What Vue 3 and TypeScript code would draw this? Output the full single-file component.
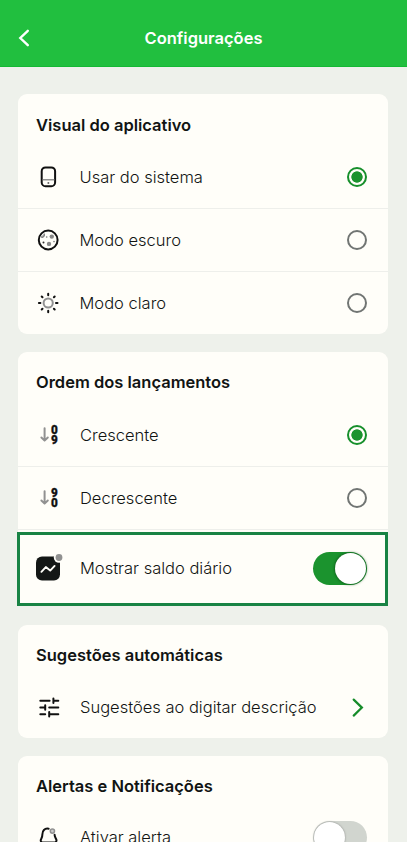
<script setup lang="ts">
import { ref } from 'vue'

type Theme = 'system' | 'dark' | 'light'
type Order = 'asc' | 'desc'

const theme = ref<Theme>('system')
const order = ref<Order>('asc')
const dailyBalance = ref(true)
const alertOn = ref(false)

const themes: { id: Theme; label: string }[] = [
  { id: 'system', label: 'Usar do sistema' },
  { id: 'dark', label: 'Modo escuro' },
  { id: 'light', label: 'Modo claro' },
]
const orders: { id: Order; label: string; digits: [string, string] }[] = [
  { id: 'asc', label: 'Crescente', digits: ['0', '9'] },
  { id: 'desc', label: 'Decrescente', digits: ['9', '0'] },
]
</script>

<template>
  <div class="screen">
    <header class="header">
      <svg class="back" viewBox="0 0 12 18">
        <path d="M9.8 1.8 2.3 9l7.5 7.2" fill="none" stroke="#fff" stroke-width="2.4" stroke-linecap="round" stroke-linejoin="miter" />
      </svg>
      <h1>Configurações</h1>
    </header>

    <main class="content">
      <section class="card visual">
        <h2>Visual do aplicativo</h2>
        <div v-for="t in themes" :key="t.id" class="row" @click="theme = t.id">
          <svg v-if="t.id === 'system'" class="icon" viewBox="0 0 24 24" fill="none">
            <rect x="5.7" y="2.4" width="13.4" height="18.8" rx="3.8" stroke="#111" stroke-width="2" />
            <path d="M6.5 14.8h12" stroke="#777" stroke-width="1.2" />
            <circle cx="12.4" cy="18" r="1" fill="#666" />
          </svg>
          <svg v-else-if="t.id === 'dark'" class="icon" viewBox="0 0 24 24" fill="none">
            <circle cx="12.2" cy="12" r="9.4" stroke="#111" stroke-width="2" />
            <path d="M5.1 8.7c1.2 1.4 4 .1 3.2-3.1" fill="#aaa" stroke="#777" stroke-width="1.1" />
            <circle cx="15.8" cy="8.6" r="2.2" fill="#888" />
            <circle cx="13" cy="15.9" r="2.2" fill="#888" />
            <circle cx="10.7" cy="9" r=".8" fill="#777" />
            <circle cx="7.5" cy="14.5" r="1" fill="#333" />
            <circle cx="18" cy="13.6" r=".8" fill="#777" />
          </svg>
          <svg v-else class="icon" viewBox="0 0 24 24" fill="none" stroke-linecap="round">
            <circle cx="12.2" cy="12" r="4.6" stroke="#919191" stroke-width="2" />
            <path d="M12.2 2.7v1.5M12.2 19.8v1.5M2.9 12h1.5M20 12h1.5M5.7 5.5l.8.8M17.9 17.7l.8.8M5.7 18.5l.8-.8M17.9 6.3l.8-.8" stroke="#111" stroke-width="2" />
          </svg>
          <span class="label">{{ t.label }}</span>
          <span class="radio" :class="{ on: theme === t.id }"></span>
        </div>
      </section>

      <section class="card order">
        <h2>Ordem dos lançamentos</h2>
        <div v-for="o in orders" :key="o.id" class="row" @click="order = o.id">
          <svg class="icon" viewBox="0 0 24 24" fill="none">
            <path d="M8.6 5.2v12.2M5.4 14.5l3.2 3.1 3.2-3.1" stroke="#919191" stroke-width="2" stroke-linecap="round" stroke-linejoin="round" />
            <text x="15" y="10.6" class="digit" textLength="6.8" lengthAdjust="spacingAndGlyphs">{{ o.digits[0] }}</text>
            <text x="15" y="21.2" class="digit" textLength="6.8" lengthAdjust="spacingAndGlyphs">{{ o.digits[1] }}</text>
          </svg>
          <span class="label">{{ o.label }}</span>
          <span class="radio" :class="{ on: order === o.id }"></span>
        </div>
        <div class="row highlighted" @click="dailyBalance = !dailyBalance">
          <svg class="icon chart" viewBox="0 0 28 28" fill="none">
            <rect x="0" y="3.5" width="24" height="24" rx="6" fill="#141716" />
            <circle cx="23" cy="4.5" r="5.2" fill="#fffef9" />
            <circle cx="23" cy="4.5" r="3.4" fill="#919191" />
            <path d="m5.4 18.8 4.4-4.7 4.4 3.5 4.4-4.7" stroke="#fffef9" stroke-width="1.9" stroke-linecap="round" stroke-linejoin="round" />
          </svg>
          <span class="label">Mostrar saldo diário</span>
          <span class="toggle" :class="{ on: dailyBalance }"></span>
        </div>
      </section>

      <section class="card suggestions">
        <h2>Sugestões automáticas</h2>
        <div class="row">
          <svg class="icon" viewBox="0 0 24 24" fill="none" stroke="#111" stroke-width="2" stroke-linecap="round">
            <path d="M4.3 4.7h9.3M17.4 2.4v4.6M17.4 4.7h4.9M4.3 11.5h4.8M9.2 9.2v4.6M13.2 11.5h9.1M4.3 18.3h4.9M13.2 16v4.6M13.2 18.3h9.1" />
          </svg>
          <span class="label">Sugestões ao digitar descrição</span>
          <svg class="chevron" viewBox="0 0 12 20">
            <path d="m1.7 1.6 8.2 8-8.2 8" fill="none" stroke="#168c2a" stroke-width="2.2" stroke-linecap="round" />
          </svg>
        </div>
      </section>

      <section class="card alerts">
        <h2>Alertas e Notificações</h2>
        <div class="row" @click="alertOn = !alertOn">
          <svg class="icon" viewBox="0 0 24 24" fill="none">
            <path d="M12.6 2.7C8.4 1.9 6.4 5 6.4 8.3c0 2.4-.2 3-1.2 4.7-1.2 2 .1 3.5 2 3.5h10.8c2 0 3.1-1.5 2.1-3.5-.8-1.6-1.5-2.6-1.5-4.2" stroke="#111" stroke-width="2" stroke-linecap="round" />
            <circle cx="16.4" cy="5.1" r="2.1" fill="#ccc" stroke="#919191" stroke-width="1.5" />
            <path d="M9.8 19.6c1 2 5 2 6 0" stroke="#111" stroke-width="1.8" stroke-linecap="round" />
          </svg>
          <span class="label">Ativar alerta</span>
          <span class="toggle" :class="{ on: alertOn }"></span>
        </div>
      </section>
    </main>
  </div>
</template>

<style>
body {
  background: #eef1eb;
  overflow: hidden;
}
</style>

<style scoped>
.screen {
  height: 842px;
  overflow: hidden;
  background: #eef1eb;
  color: #111413;
  font-family: Inter, "Liberation Sans", sans-serif;
}
.header {
  box-sizing: border-box;
  height: 67px;
  padding: 10px 18px 0;
  display: grid;
  grid-template-columns: 12px 1fr 12px;
  align-items: center;
  background: #21bf3f;
  border-bottom: 1px solid #14b934;
}
.back {
  width: 12px;
  height: 18px;
}
h1 {
  margin: 0;
  text-align: center;
  color: #fff;
  font-size: 16.5px;
  font-weight: 600;
  line-height: 24px;
}
.content {
  display: flex;
  flex-direction: column;
  gap: 18px;
  padding: 27px 19px 0 18px;
}
.card {
  background: #fffef9;
  border-radius: 9px;
}
h2 {
  margin: 0;
  padding: 18px 18px 10px;
  font-size: 16.5px;
  font-weight: 600;
  line-height: 24px;
}
.row {
  box-sizing: border-box;
  height: 63px;
  display: flex;
  align-items: center;
  padding: 0 21px 0 18px;
  border-bottom: 1px solid #eeefeb;
}
.visual .row:last-child {
  height: 62px;
  border-bottom: 0;
}
.visual h2 {
  padding: 19px 18px 9px;
}
.icon {
  width: 24px;
  height: 24px;
  flex: none;
  margin-right: 20px;
}
.label {
  flex: 1;
  white-space: nowrap;
  font-size: 16.5px;
  font-weight: 300;
  line-height: 24px;
}
.visual .icon {
  margin-right: 19.5px;
}
.digit {
  font-family: Roboto, sans-serif;
  font-size: 12px;
  font-weight: 900;
  fill: #111;
  stroke: #111;
  stroke-width: 0.3px;
}
.radio {
  box-sizing: border-box;
  width: 20px;
  height: 20px;
  border: 2px solid #717573;
  border-radius: 50%;
}
.radio.on {
  border: 2px solid #168f2b;
  background: radial-gradient(circle, #1b932e 5.3px, transparent 6px);
}
.row.highlighted {
  height: 74px;
  margin: 2px 0 2px -1px;
  padding: 0 18px 0 16px;
  border: 3px solid #188344;
  background: #fffef9;
}
.order {
  height: 254px;
  margin-bottom: 1px;
}
.icon.chart {
  width: 28px;
  height: 28px;
  margin: -4px 16px 0 0;
}
.row.highlighted .label {
  margin-top: -2px;
}
.row.highlighted .toggle {
  margin-top: -1px;
}
.toggle {
  box-sizing: border-box;
  display: flex;
  width: 54px;
  height: 33px;
  padding: 1px;
  border-radius: 17px;
  background: #d1d5cf;
}
.toggle::before {
  content: "";
  width: 31px;
  height: 31px;
  border-radius: 50%;
  background: #fff;
  box-shadow: 0 0 2px #555a;
}
.toggle.on {
  justify-content: flex-end;
  background: #1b932e;
}
.toggle.on::before {
  box-shadow: 0 0 3px #063d0f;
}
.suggestions .row {
  height: 61px;
  border: 0;
}
.suggestions .label {
  margin-top: -1px;
}
.chevron {
  width: 12px;
  height: 20px;
  margin-right: 3px;
}
.alerts .row {
  border: 0;
  height: 59px;
}
.alerts .label {
  margin-top: -1px;
}
</style>
